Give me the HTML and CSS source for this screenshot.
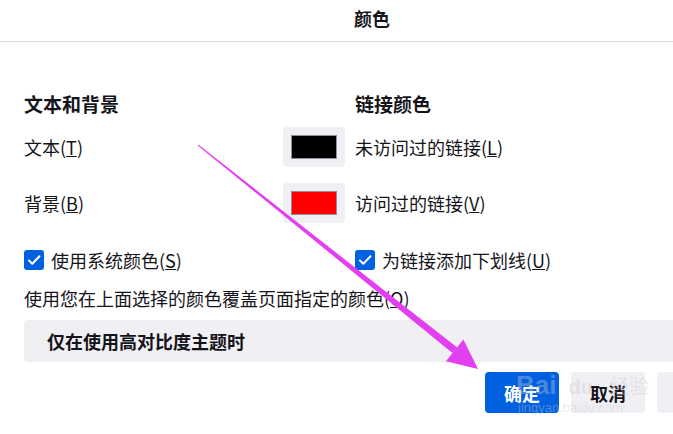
FILE: index.html
```html
<!DOCTYPE html>
<html lang="zh-CN">
<head>
  <meta charset="UTF-8">
  <meta name="viewport" content="width=device-width, initial-scale=1.0">
  <title>颜色</title>
  <link rel="stylesheet" href="styles.css">
</head>
<body>
  <div class="dialog">
    <header class="dialog-header">
      <h1>颜色</h1>
    </header>

    <main class="dialog-body">
      <div class="columns">
        <section class="col">
          <h2>文本和背景</h2>
          <div class="row">
            <span class="row-label">文本(<u>T</u>)</span>
            <button class="swatch"><span class="chip chip-black"></span></button>
          </div>
          <div class="row">
            <span class="row-label">背景(<u>B</u>)</span>
            <button class="swatch"><span class="chip chip-red"></span></button>
          </div>
          <label class="check">
            <span class="box"><svg viewBox="0 0 20 20" width="20" height="20"><path d="M5 10.5l3.3 3.3L15.5 6.2" fill="none" stroke="#fff" stroke-width="2" stroke-linecap="round" stroke-linejoin="round"/></svg></span>
            <span>使用系统颜色(<u>S</u>)</span>
          </label>
        </section>

        <section class="col">
          <h2>链接颜色</h2>
          <div class="row">
            <span class="row-label">未访问过的链接(<u>L</u>)</span>
          </div>
          <div class="row">
            <span class="row-label">访问过的链接(<u>V</u>)</span>
          </div>
          <label class="check">
            <span class="box"><svg viewBox="0 0 20 20" width="20" height="20"><path d="M5 10.5l3.3 3.3L15.5 6.2" fill="none" stroke="#fff" stroke-width="2" stroke-linecap="round" stroke-linejoin="round"/></svg></span>
            <span>为链接添加下划线(<u>U</u>)</span>
          </label>
        </section>
      </div>

      <p class="override-label">使用您在上面选择的颜色覆盖页面指定的颜色(<u>O</u>)</p>
      <div class="select">仅在使用高对比度主题时</div>
    </main>

    <footer class="buttons">
      <button class="btn btn-primary">确定</button>
      <button class="btn">取消</button>
      <button class="btn"></button>
    </footer>
  </div>

  <!-- annotation arrow drawn over the screenshot -->
  <svg class="annotation" viewBox="0 0 673 434" width="673" height="434">
    <polygon points="198.3,144.6 197.7,145.4 452.4,353 457.2,347.6" fill="#e23ff0"/>
    <polygon points="478,369 463.4,339.4 445.9,361.2" fill="#e23ff0"/>
  </svg>

  <div class="watermark">
    <span class="wm-logo">Bai<span class="wm-du">du</span><span class="wm-cn">经验</span></span>
    <span class="wm-url">jingyan.baidu.com</span>
  </div>
</body>
</html>
```

FILE: styles.css
```css
html, body {
  margin: 0;
  padding: 0;
  overflow: hidden;
}

body {
  width: 673px;
  height: 434px;
  background-color: #fff;
  color: #15141a;
  font-family: "Noto Sans CJK SC", "Noto Sans", sans-serif;
  font-size: 18px;
}

.dialog {
  width: 744px; /* dialog is wider than the visible area */
}

.dialog-header {
  height: 41px;
  border-bottom: 1px solid #d9d9dd;
}

.dialog-header h1 {
  margin: 0;
  font-size: 18px;
  line-height: 36px;
  font-weight: bold;
  text-align: center;
}

.dialog-body {
  padding: 48px 24px 0 24px;
}

.columns {
  display: grid;
  grid-template-columns: 321px 1fr;
  column-gap: 10px;
}

.col h2 {
  margin: 0 0 9px 0;
  font-size: 19px;
  line-height: 28px;
  font-weight: bold;
}

.row {
  display: flex;
  align-items: center;
  justify-content: space-between;
  height: 40px;
  margin-bottom: 16px;
}

.row-label {
  line-height: 40px;
}

.swatch {
  width: 62px;
  height: 40px;
  padding: 0;
  border: none;
  border-radius: 4px;
  background-color: #f0f0f4;
  display: flex;
  align-items: center;
  justify-content: center;
}

.chip {
  width: 44px;
  height: 22px;
  border: 1px solid #8f8f9d;
}

.chip-black {
  background-color: #000;
}

.chip-red {
  background-color: #ff0000;
}

.check {
  display: flex;
  align-items: center;
  gap: 7px;
  height: 28px;
  margin-top: 23px; /* collapses with the row margin above */
}

.box {
  width: 20px;
  height: 20px;
  border-radius: 3px;
  background-color: #0061e0;
  display: flex;
}

.override-label {
  margin: 11px 0 0 0;
  line-height: 26px;
}

.select {
  margin-top: 9px;
  height: 42px;
  line-height: 42px;
  padding-left: 23px;
  border-radius: 4px;
  background-color: #f0f0f4;
  font-weight: bold;
}

.buttons {
  display: flex;
  justify-content: flex-end;
  gap: 12px;
  padding: 10px 13px 0 0;
}

.btn {
  width: 74px;
  height: 41px;
  border: none;
  border-radius: 4px;
  background-color: #f0f0f4;
  color: #15141a;
  font-family: inherit;
  font-size: 18px;
  font-weight: bold;
  padding: 0;
}

.btn-primary {
  background-color: #0061e0;
  color: #fff;
}

.annotation {
  position: absolute;
  left: 0;
  top: 0;
  pointer-events: none;
}

.watermark {
  position: absolute;
  left: 516px;
  top: 372px;
  display: flex;
  flex-direction: column;
  align-items: flex-start;
  color: rgba(200, 200, 210, 0.4);
  pointer-events: none;
}

.wm-logo {
  font-family: "Liberation Sans", sans-serif;
  font-size: 26px;
  font-weight: bold;
  line-height: 26px;
  white-space: nowrap;
}

.wm-du {
  font-size: 20px;
  margin-left: 12px;
}

.wm-cn {
  font-family: "Noto Sans CJK SC", sans-serif;
  font-size: 20px;
  font-weight: normal;
  margin-left: 16px;
}

.wm-url {
  font-family: "Liberation Sans", sans-serif;
  font-size: 13px;
  line-height: 16px;
  margin-left: 2px;
}
```
